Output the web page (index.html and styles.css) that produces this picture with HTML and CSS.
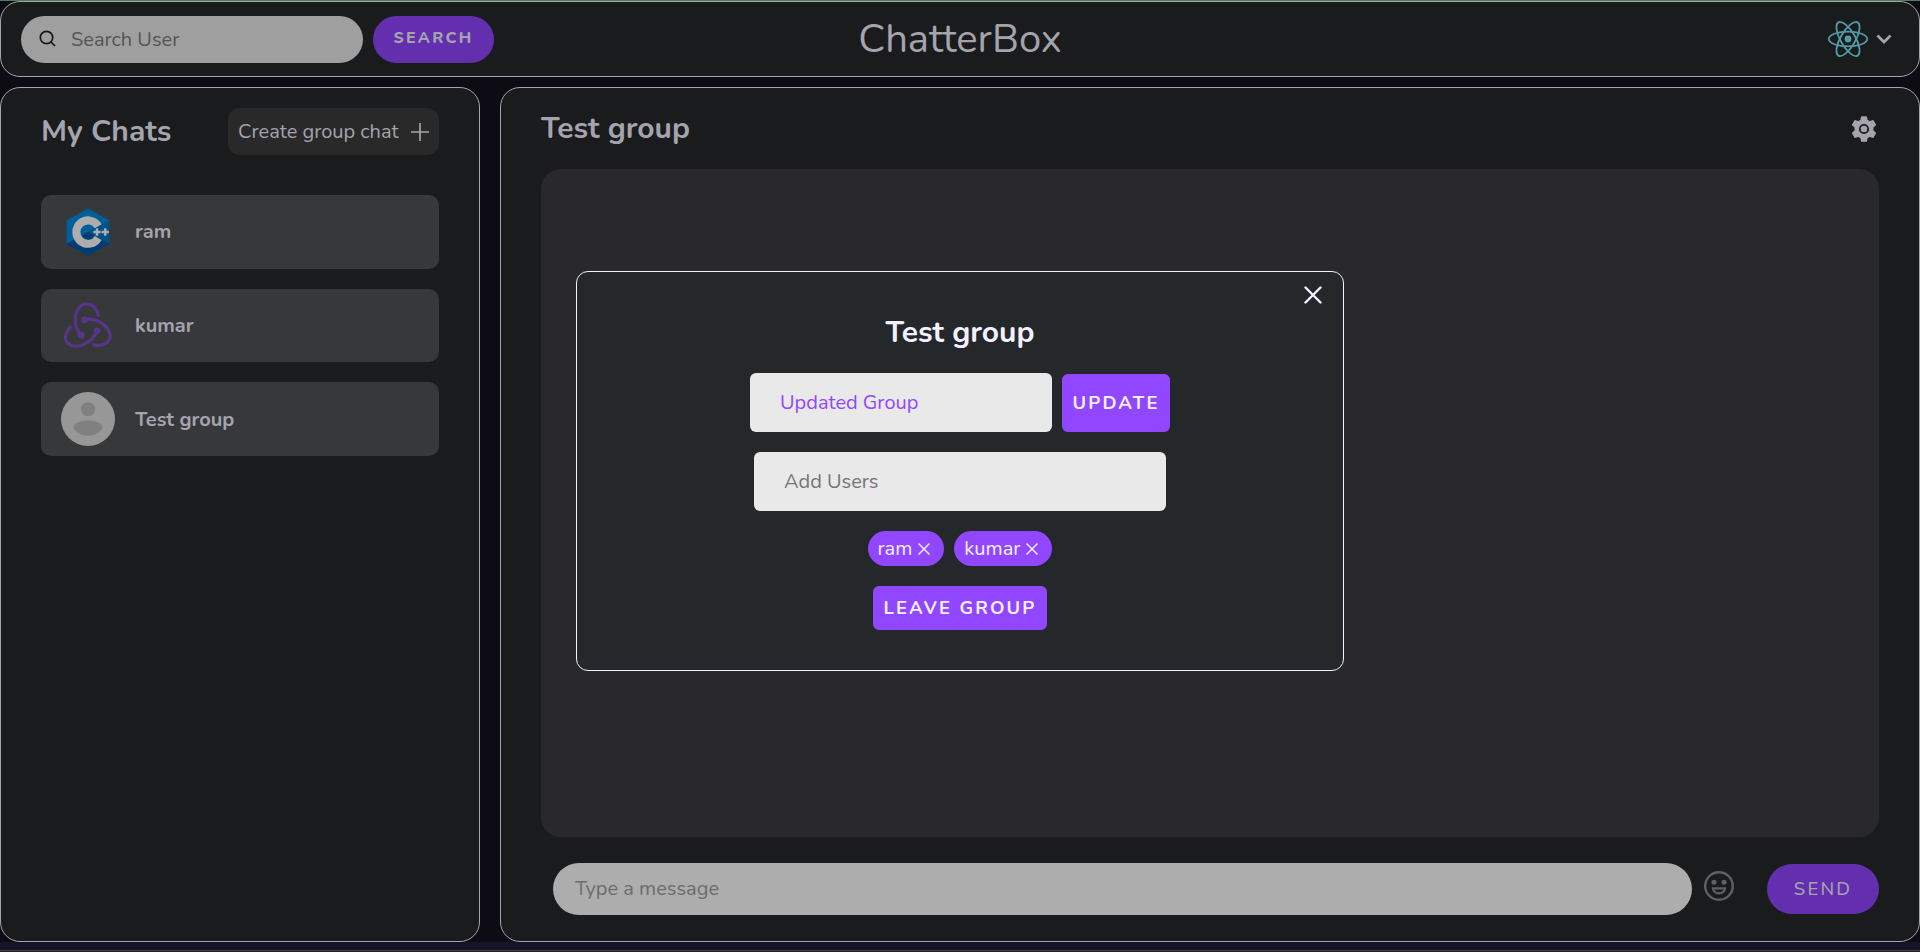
FILE: index.html
```
<!DOCTYPE html>
<html lang="en">
<head>
<meta charset="utf-8">
<title>ChatterBox</title>
<link rel="stylesheet" href="styles.css">
</head>
<body>
<header class="topbar">
  <div class="search">
    <label class="search-field">
      <svg width="18" height="18" viewBox="0 0 18 18" fill="none" stroke="#161616" stroke-width="1.7"><circle cx="7.500" cy="7.500" r="6.2"/><path d="M12 12 16 16"/></svg>
      <span>Search User</span>
    </label>
    <button class="pill-btn search-btn">SEARCH</button>
  </div>
  <h1 class="brand">ChatterBox</h1>
  <div class="account">
    <svg width="42" height="38" viewBox="-21 -19 42 38" fill="none" stroke="#539aa6" stroke-width="1.8"><circle r="3.4" fill="#539aa6" stroke="none"/><ellipse rx="19.2" ry="7.4"/><ellipse rx="19.2" ry="7.4" transform="rotate(60)"/><ellipse rx="19.2" ry="7.4" transform="rotate(120)"/></svg>
    <svg width="16" height="10" viewBox="-1 0 16 10" fill="none" stroke="#a5a3ae" stroke-width="2.7"><path d="M.5 1.500 7 8 13.500 1.500"/></svg>
  </div>
</header>
<main class="workspace">
  <aside class="panel sidebar">
    <div class="sidebar-head">
      <h2 class="heading">My Chats</h2>
      <button class="create"><span>Create group chat</span>
        <svg width="18" height="18" viewBox="0 0 18 18" stroke="#a5a3ae" stroke-width="1.7"><path d="M9 0V18M0 9H18"/></svg>
      </button>
    </div>
    <ul class="chats">
      <li class="chat">
        <svg width="54" height="54" viewBox="0 0 54 54"><path fill="#005f99" d="M27 3.500 5.500 15.500V39L27 27 48.500 15.500Z"/><path fill="#00508a" d="M48.500 15.500 27 27 48.500 39Z"/><path fill="#003c72" d="M5.500 39 27 50.700 48.500 39 27 27Z"/><path d="M37.200 21.300A11.700 11.700 0 1 0 37.200 32.900" fill="none" stroke="#adadad" stroke-width="8"/><path stroke="#adadad" stroke-width="2.500" d="M32.300 27H39.700M36 23.300V30.700M40.500 27H47.900M44.200 23.300V30.700"/></svg>
        <span>ram</span>
      </li>
      <li class="chat">
        <svg width="54" height="54" viewBox="0 0 54 54" fill="none" stroke="#573589" stroke-width="3.200"><path d="M20.300 37.500C14.500 32 12.500 21 16 13.500C19 6 27 3.500 32.500 8.500C35 10.700 36.800 14.500 37.700 18.500"/><path d="M23.800 21.800C34 19 45.500 26 48.600 35C51 43 44 49.500 31.500 46.500"/><path d="M36 32.800C33 41 25 46.500 17.500 48C7 49.500 2.500 42 5.500 34.500C6.500 32 7.900 30.200 10.300 28"/><g fill="#573589" stroke="none"><circle cx="23.700" cy="21.800" r="3.400"/><circle cx="36" cy="32.800" r="3.400"/><circle cx="20.300" cy="37.200" r="3.400"/></g></svg>
        <span>kumar</span>
      </li>
      <li class="chat">
        <svg width="54" height="54" viewBox="0 0 54 54"><circle cx="27" cy="27" r="27" fill="#979797"/><circle cx="27" cy="17.300" r="7" fill="#808080"/><path d="M12.200 35.500C13.500 26 40.500 26 41.800 35.500C37 46.500 17 46.500 12.200 35.500Z" fill="#808080"/></svg>
        <span>Test group</span>
      </li>
    </ul>
  </aside>
  <section class="panel room">
    <div class="room-head">
      <h2 class="heading">Test group</h2>
      <svg width="26" height="26" viewBox="0 0 26 26"><path fill="#a5a3ae" stroke="#a5a3ae" stroke-width="1.500" stroke-linejoin="round" d="M10.700 1H15.300L16 4.400 18.700 6 22 4.800 24.300 8.900 21.700 11.300V14.700L24.300 17.100 22 21.200 18.700 20 16 21.600 15.300 25H10.700L10 21.600 7.300 20 4 21.200 1.700 17.100 4.300 14.700V11.300L1.700 8.900 4 4.800 7.300 6 10 4.400Z"/><circle cx="13" cy="13" r="4.200" fill="none" stroke="#1a1b1c" stroke-width="1.800"/></svg>
    </div>
    <div class="messages"></div>
    <div class="composer">
      <label class="message-field"><span>Type a message</span></label>
      <svg class="smile" width="30" height="30" viewBox="0 0 30 30"><circle cx="15" cy="15" r="13.800" fill="none" stroke="#606061" stroke-width="2.400"/><circle cx="10" cy="11.300" r="2.500" fill="#606061"/><circle cx="20" cy="11.300" r="2.500" fill="#606061"/><path d="M9 17.300H21C20.300 24 9.700 24 9 17.300Z" fill="none" stroke="#606061" stroke-width="2.200"/></svg>
      <button class="pill-btn send-btn">SEND</button>
    </div>
  </section>
</main>
<div class="modal">
  <svg class="modal-close" width="18" height="18" viewBox="0 0 18 18" stroke="#f3f0ff" stroke-width="2.400" stroke-linecap="round"><path d="M1.500 1.500 16.500 16.500M16.500 1.500 1.500 16.500"/></svg>
  <h2 class="heading">Test group</h2>
  <div class="rename">
    <label class="field rename-field"><span>Updated Group</span></label>
    <button class="action update-btn">UPDATE</button>
  </div>
  <label class="field add-field"><span>Add Users</span></label>
  <div class="members">
    <span class="member">ram<svg width="12" height="12" viewBox="0 0 12 12" stroke="#f0eaff" stroke-width="1.500"><path d="M.5 .5 11.500 11.500M11.500 .5 .5 11.500"/></svg></span>
    <span class="member">kumar<svg width="12" height="12" viewBox="0 0 12 12" stroke="#f0eaff" stroke-width="1.500"><path d="M.5 .5 11.500 11.500M11.500 .5 .5 11.500"/></svg></span>
  </div>
  <button class="action leave-btn">LEAVE GROUP</button>
</div>
</body>
</html>
```
FILE: styles.css
```
* { box-sizing: border-box; }
body {
  margin: 0;
  height: 952px;
  overflow: hidden;
  display: flex;
  flex-direction: column;
  background: linear-gradient(#0d0c15 942px, #151326 942px, #151326 950px, #444144 950px, #444144 951px, #241e22 951px);
  border-top: 1px solid #4b8057;
  color: #a5a3ae;
  font-family: Nunito, Lato, "Open Sans", sans-serif;
  font-size: 20px;
  line-height: 27px;
}
h1, h2, ul { margin: 0; padding: 0; }
svg { display: block; flex: none; }
span { white-space: nowrap; }
button { border: 0; padding: 0; font: inherit; color: inherit; white-space: nowrap; }

.topbar {
  height: 76px;
  flex: none;
  display: grid;
  grid-template-columns: 1fr auto 1fr;
  align-items: center;
  padding: 0 20px;
  border: 1px solid #a5a3ae;
  border-radius: 20px;
  background: #1a1b1c;
}
.search { display: flex; gap: 10px; }
.search-field {
  width: 342px;
  height: 47px;
  display: flex;
  align-items: center;
  gap: 14px;
  padding-left: 18px;
  border-radius: 24px;
  background: #9f9f9f;
  color: #555;
}
.pill-btn { background: #632fae; border-radius: 25px; padding-bottom: 2px; }
.search-btn { width: 121px; height: 47px; font-size: 16px; font-weight: 800; letter-spacing: 2.3px; }
.brand { font-size: 40px; font-weight: 400; line-height: 54px; }
.account { justify-self: end; display: flex; align-items: center; gap: 7px; margin-right: 7px; }

.workspace { display: flex; gap: 20px; margin-top: 10px; height: 855px; }
.panel { border: 1px solid #a5a3ae; border-radius: 20px; background: #1a1b1c; }
.heading { font-size: 30px; font-weight: 700; line-height: 41px; }
.sidebar { width: 480px; padding: 20px 40px; }
.sidebar-head { height: 47px; display: flex; align-items: center; justify-content: space-between; }
.create {
  width: 211px;
  height: 47px;
  display: flex;
  align-items: center;
  justify-content: space-between;
  padding: 0 10px;
  border-radius: 12px;
  background: #292929;
}
.chats { list-style: none; margin-top: 40px; display: grid; gap: 20px; }
.chat {
  height: 73.6px;
  display: flex;
  align-items: center;
  gap: 20px;
  padding: 0 20px;
  border-radius: 10px;
  background: #37383a;
  font-weight: 700;
}
.chat:last-child span { padding-top: 1px; }
.room { flex: 1; padding: 20px 40px; }
.room-head { height: 41px; display: flex; align-items: center; justify-content: space-between; padding-right: 2px; }
.messages { height: 668px; margin-top: 20px; border-radius: 20px; background: #29292b; }
.composer { display: flex; align-items: center; margin-top: 26px; padding-left: 12px; }
.message-field {
  width: 1139px;
  height: 52px;
  display: flex;
  align-items: center;
  padding: 0 0 2px 22px;
  border-radius: 26px;
  background: #adadad;
  color: #6c6c6c;
}
.smile { margin: -6px 33px 0 12px; }
.send-btn { width: 112px; height: 50px; font-size: 18.4px; font-weight: 500; letter-spacing: 2.2px; }

.modal {
  position: absolute;
  left: 576px;
  top: 271px;
  width: 768px;
  height: 400px;
  display: flex;
  flex-direction: column;
  align-items: center;
  padding-top: 40px;
  border: 1px solid #f3f0ff;
  border-radius: 12px;
  background: #25282b;
  color: #f3f0ff;
}
.modal-close { position: absolute; right: 21px; top: 14px; }
.rename { display: flex; align-items: flex-end; gap: 10px; margin-top: 20px; }
.field {
  height: 59px;
  display: flex;
  align-items: center;
  padding-left: 30px;
  border-radius: 6px;
  background: #e9e9e9;
}
.rename-field { width: 302px; color: #9147ff; }
.add-field { width: 412px; margin-top: 20px; color: #757575; }
.action {
  padding-bottom: 2px;
  border-radius: 6px;
  background: #9147ff;
  font-size: 18.4px;
  font-weight: 700;
  letter-spacing: 2.2px;
}
.update-btn { width: 108px; height: 58px; }
.members { display: flex; gap: 10px; margin-top: 20px; }
.member {
  height: 35px;
  display: flex;
  align-items: center;
  gap: 6px;
  padding: 0 14px 0 10px;
  border-radius: 18px;
  background: #9147ff;
}
.leave-btn { width: 174px; height: 44px; margin-top: 20px; }
```
